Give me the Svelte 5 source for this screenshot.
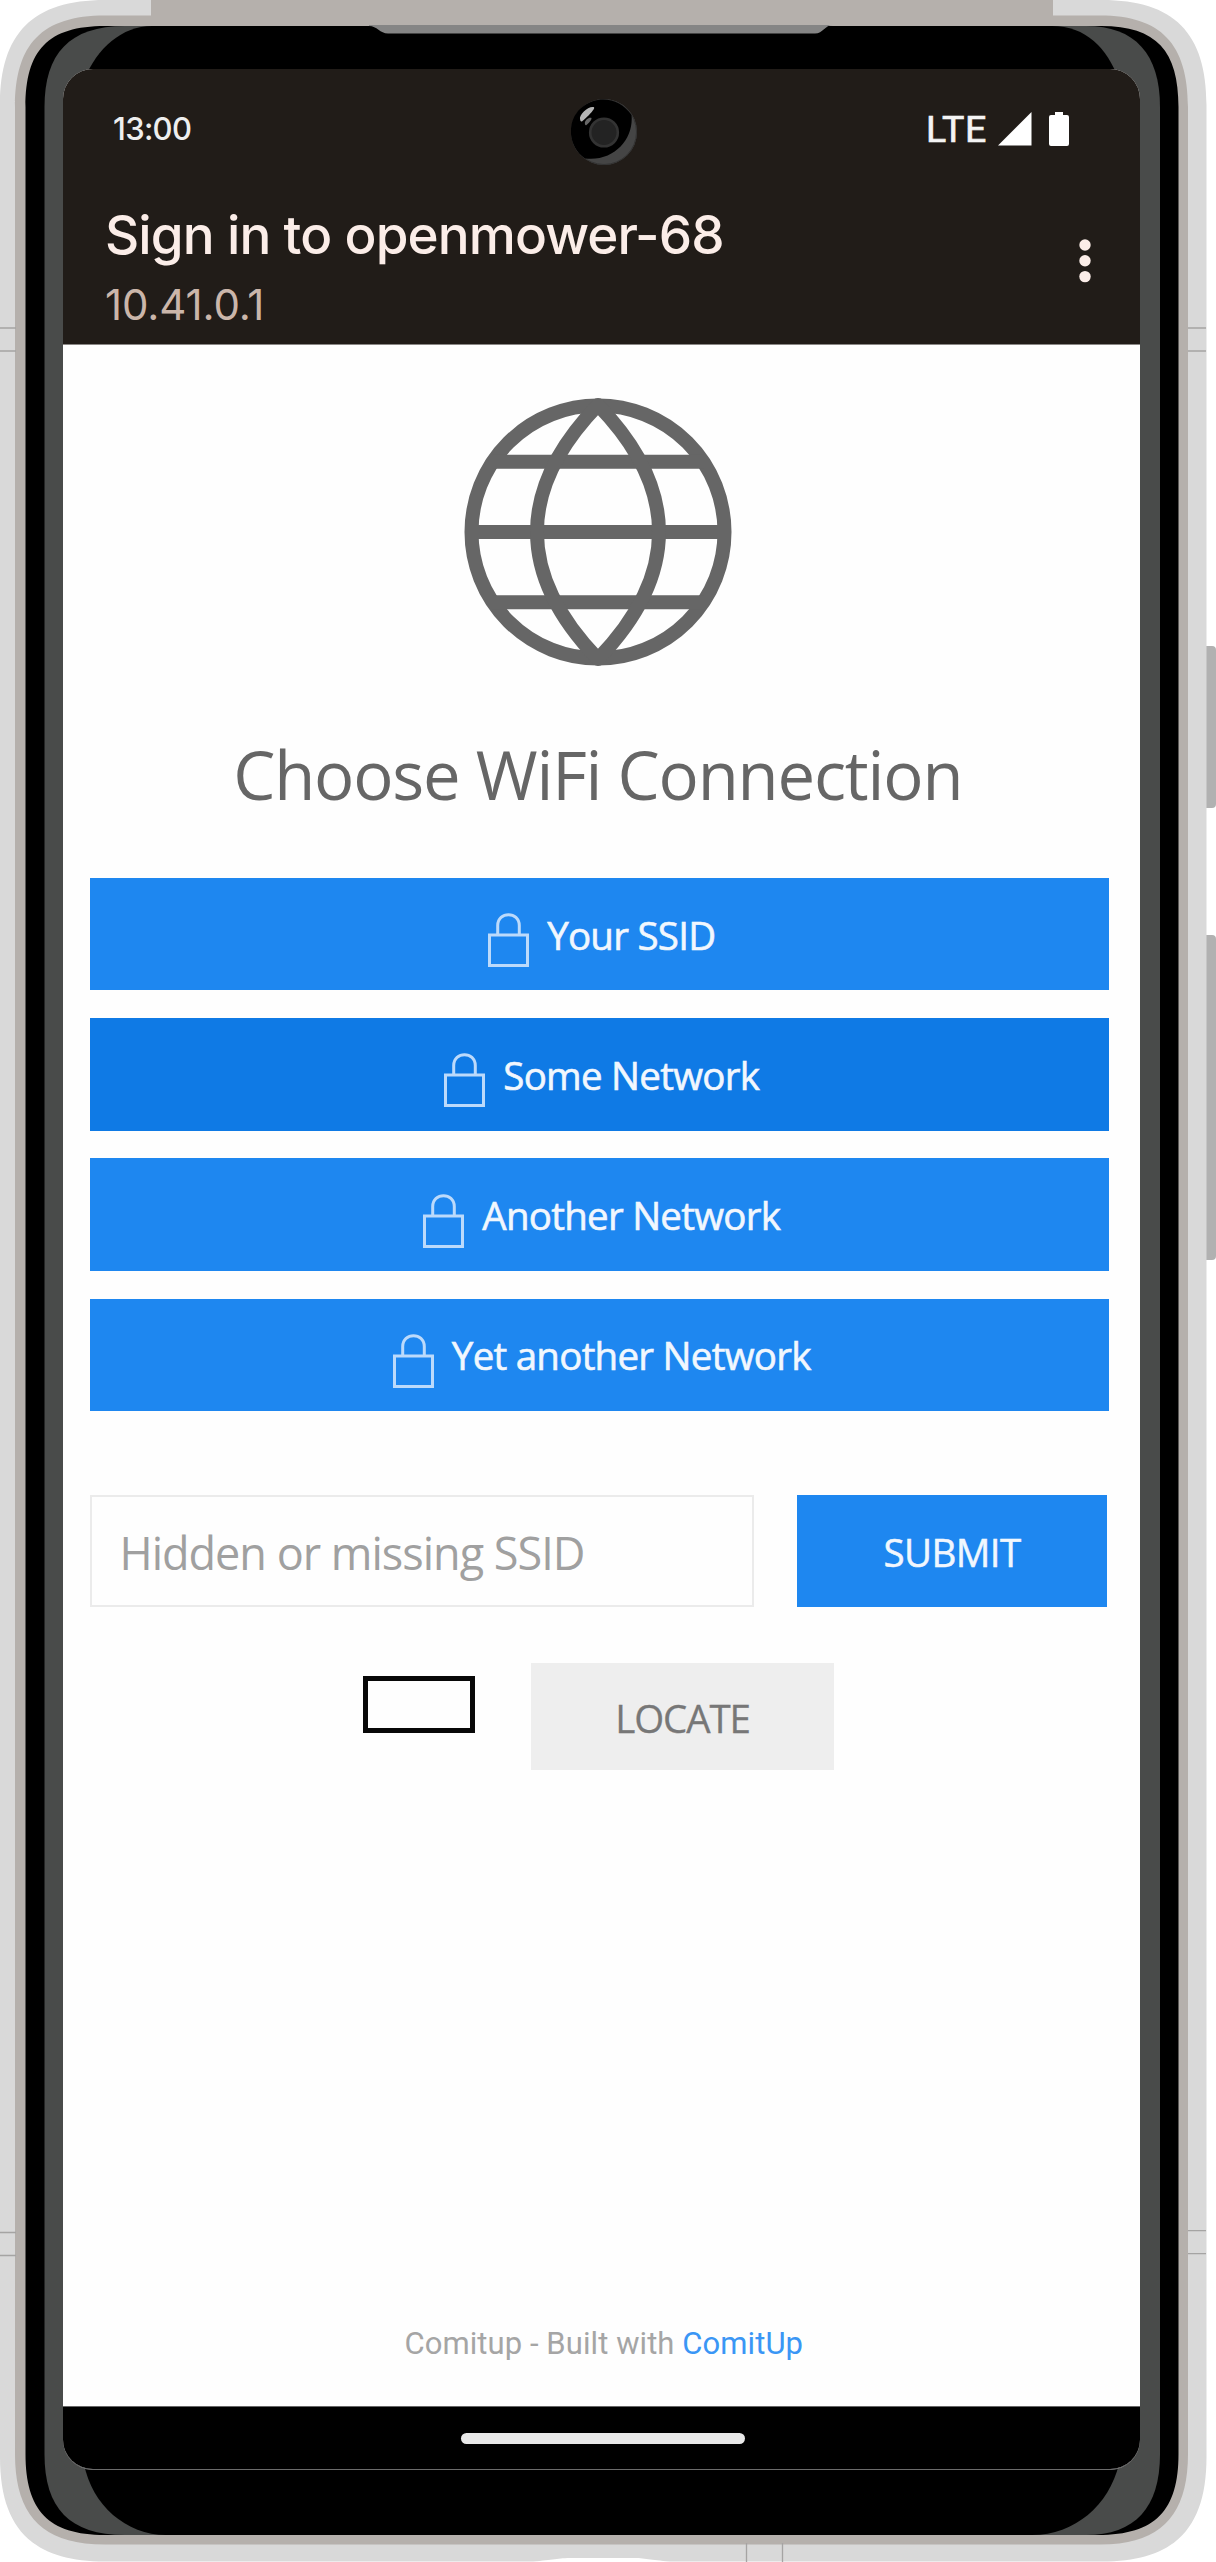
<script>
  const networks = [
    { name: 'Your SSID', active: false },
    { name: 'Some Network', active: true },
    { name: 'Another Network', active: false },
    { name: 'Yet another Network', active: false }
  ];
  let ssid = $state('');
</script>

<div class="phone">
  <!-- Device body: side keys, metal frame, bezel, antenna lines and speaker -->
  <svg class="frame" viewBox="0 0 1216 2562" aria-hidden="true">
    <path fill="#b1b1b1" d="M1206 646H1212Q1216 646 1216 650V804Q1216 808 1212 808H1206ZM1206 935H1212Q1216 935 1216 939V1256Q1216 1260 1212 1260H1206Z" />
    <path fill="#d9d9d9" d="M0 105C0 33 33 0 105 0H1102C1174 0 1206.500 33 1206.500 105V2457C1206.500 2529 1174 2561.500 1102 2561.500H670C650 2560 645 2558 632 2558H572C558 2558 553 2560 533 2561.500H105C33 2561.500 0 2529 0 2457Z" />
    <path fill="#b5b0ac" d="M15 107C15 44 42 15.500 105 15.500H151V0H1053V15.500H1100C1161 15.500 1188 44 1188 107V2454C1188 2515 1161 2544.500 1100 2544.500H105C42 2544.500 15 2515 15 2454Z" />
    <path fill="#000" d="M25.500 107C25.500 50 48 26 105 26H1098C1156 25 1178.500 50 1178.500 107V2454C1178.500 2510 1156 2535 1098 2535H105C48 2535 25.500 2510 25.500 2454Z" />
    <path fill="#494b4a" d="M44.500 107C44.500 54 69 26 125 26H1086C1135 26 1160 54 1160 107V2454C1160 2508 1135 2535 1086 2535H125C69 2535 44.500 2508 44.500 2454Z" />
    <path fill="#000" d="M84 80C97 48 122 26 152 26H1052C1086 26 1107 48 1119 80V2464C1109 2505 1075 2535 1032 2535H166C126 2535 92 2505 84 2464Z" />
    <path fill="#858585" d="M369 26C377 26 380 33.500 388 33.500H815C823 33.500 825 25 833 25H369Z" />
    <path stroke="#a5a4a3" stroke-width="1.300" fill="none" d="M0 328H16M0 351H16M1188 328H1206M1188 351H1206M0 2232.500H16M0 2255.500H16M1188 2230.700H1206M1188 2253.700H1206M746.500 2543V2562M782.500 2543V2562" />
  </svg>

  <main class="screen">
    <div class="status">
      <span class="time">13:00</span>
      <span class="lte">LTE</span>
      <svg class="signal" viewBox="0 0 34 34"><path fill="#fff" d="M0 33.500 33.500 0V33.500Z" /></svg>
      <svg class="battery" viewBox="0 0 20 34"><path fill="#fff" d="M6 0H14V3H18Q20 3 20 5V32Q20 34 18 34H2Q0 34 0 32V5Q0 3 2 3H6Z" /></svg>
    </div>

    <header class="appbar">
      <div class="titles">
        <h1>Sign in to openmower-68</h1>
        <p>10.41.0.1</p>
      </div>
      <svg class="more" viewBox="0 0 12 44" role="img" aria-label="More options">
        <g fill="#fbede8"><circle cx="6" cy="6" r="5.700" /><circle cx="6" cy="21.800" r="5.700" /><circle cx="6" cy="37.600" r="5.700" /></g>
      </svg>
    </header>

    <section class="page">
      <svg class="globe" viewBox="0 0 268 268" aria-hidden="true">
        <g fill="none" stroke="#666" stroke-width="14">
          <circle cx="134" cy="134" r="126.500" />
          <path d="M8 134H260M28 63.700H240M28 204.300H240" />
          <path d="M134 7C52.700 91 52.700 177 134 261C215.300 177 215.300 91 134 7Z" stroke-linejoin="round" />
        </g>
      </svg>

      <h2>Choose WiFi Connection</h2>

      <div class="networks">
        {#each networks as network}
          <button class="network" class:active={network.active}>
            <svg class="lock" viewBox="0 0 41 54" aria-hidden="true">
              <g fill="none" stroke="#bcdafb" stroke-width="3">
                <rect x="1.500" y="22" width="38" height="30.500" />
                <path d="M9.700 22V12.500C9.700 -2 31.300 -2 31.300 12.500V22" />
              </g>
            </svg>
            <span>{network.name}</span>
          </button>
        {/each}
      </div>

      <form class="hidden-network" onsubmit={(e) => e.preventDefault()}>
        <input bind:value={ssid} placeholder="Hidden or missing SSID" />
        <button class="submit">SUBMIT</button>
      </form>

      <div class="locate-row">
        <span class="indicator"></span>
        <button class="locate">LOCATE</button>
      </div>

      <footer>Comitup - Built with <span class="link">ComitUp</span></footer>
    </section>

    <nav class="gesture"><span class="pill"></span></nav>
  </main>

  <svg class="camera" viewBox="0 0 66 66" aria-hidden="true">
    <circle cx="33" cy="33" r="33" fill="#454545" />
    <circle cx="33" cy="33" r="32.500" fill="none" stroke="#333" />
    <path fill="#000" d="M14 59.500C-5 46 -4 19 12 7.500C28 -5 50 0 60.500 16C63 39 44 63 14 59.500Z" />
    <circle cx="33" cy="33.500" r="13.800" fill="#232323" stroke="#333" stroke-width="2.600" />
    <path fill="#b5b5b5" d="M9 20C8 16 17 7 22.500 8C26 9 15 19 11 22.500Q9.300 23 9 20Z" />
    <path fill="#676767" d="M13.800 24C14 21 18 18 20.500 19Q21 21 15.500 26Q14 27 13.800 24Z" />
  </svg>
</div>

<style>
  :global(body) {
    margin: 0;
    background: #fff;
  }
  .phone {
    position: relative;
    width: 1216px;
    height: 2562px;
    padding: 69px 76px 93px 63px;
    box-sizing: border-box;
    overflow: hidden;
    font-family: 'Open Sans', 'Noto Sans', sans-serif;
  }
  .frame {
    position: absolute;
    inset: 0;
    width: 1216px;
    height: 2562px;
  }
  .camera {
    position: absolute;
    left: 570.500px;
    top: 98.500px;
    width: 66px;
    height: 66px;
  }
  .screen {
    position: relative;
    display: flex;
    flex-direction: column;
    height: 2400px;
    border-bottom: 1px solid #6b6b6b;
    border-radius: 30px;
    overflow: hidden;
    background: #fefefe;
  }
  .status {
    display: flex;
    align-items: center;
    height: 119px;
    padding: 0 71px 0 50px;
    box-sizing: border-box;
    background: #211c18;
    color: #fff;
    flex: none;
  }
  .time {
    flex: 1;
    font: 500 31px/40px Inter, sans-serif;
    letter-spacing: -0.700px;
    color: #eee;
  }
  .lte {
    font: 400 37.500px/40px Roboto, sans-serif;
    letter-spacing: 0.700px;
    color: #f4f4f4;
    margin-right: 10.500px;
    -webkit-text-stroke: 0.700px #f4f4f4;
  }
  .signal {
    width: 34px;
    height: 34px;
    margin-right: 17.500px;
  }
  .battery {
    width: 20px;
    height: 34px;
  }
  .appbar {
    display: flex;
    justify-content: space-between;
    height: 157px;
    padding: 16.500px 49px 0 42px;
    box-sizing: border-box;
    background: #211c18;
    border-bottom: 1px solid #8a8785;
    flex: none;
  }
  h1 {
    margin: 0;
    font: 500 53px/60px Inter, sans-serif;
    letter-spacing: -0.900px;
    color: #fbede8;
    white-space: nowrap;
  }
  p {
    margin: 15px 0 0;
    font: 400 42px/50px Inter, sans-serif;
    letter-spacing: -0.100px;
    color: #cbb6aa;
  }
  .more {
    width: 12px;
    height: 44px;
    margin-top: 34px;
  }
  .page {
    flex: 1;
    display: flex;
    flex-direction: column;
    padding: 53px 31px 0 26.500px;
  }
  .globe {
    width: 268px;
    height: 268px;
    align-self: center;
    margin-right: 2.500px;
    flex: none;
  }
  h2 {
    margin: 67.500px 0 64.200px;
    padding-right: 3px;
    font-size: 67px;
    line-height: 80px;
    font-weight: 400;
    letter-spacing: -1.180px;
    color: #666;
    text-align: center;
    white-space: nowrap;
  }
  .networks {
    display: grid;
    gap: 27.600px;
  }
  button {
    border: 0;
    padding: 0;
    font: 400 38.500px/50px 'Open Sans', 'Noto Sans', sans-serif;
    color: #fff;
    background: #1e87f0;
  }
  .network {
    display: flex;
    align-items: center;
    justify-content: center;
    gap: 18px;
    height: 112.700px;
    padding: 1px 0 0 5px;
    letter-spacing: -0.750px;
  }
  .network.active {
    background: #0f7ae5;
  }
  .network span {
    color: #f1f7fe;
    -webkit-text-stroke: 0.600px #f1f7fe;
  }
  .lock {
    width: 41px;
    height: 54px;
    margin-top: 11px;
  }
  .hidden-network {
    display: flex;
    justify-content: space-between;
    height: 112.700px;
    margin-top: 83.500px;
    padding-right: 2px;
  }
  input {
    width: 664.500px;
    box-sizing: border-box;
    border: 2px solid #ebebeb;
    padding: 4px 28px 0;
    font: 400 45px/60px 'Open Sans', 'Noto Sans', sans-serif;
    letter-spacing: -1px;
    background: #fefefe;
  }
  input::placeholder {
    color: #a0a0a0;
    opacity: 1;
  }
  .submit {
    width: 310px;
    padding-top: 1px;
    letter-spacing: -0.600px;
    color: #f1f7fe;
    -webkit-text-stroke: 0.500px #f1f7fe;
  }
  .locate-row {
    display: flex;
    align-items: flex-start;
    gap: 56px;
    margin-top: 55.500px;
    padding-left: 273.500px;
  }
  .indicator {
    width: 112px;
    height: 57px;
    margin-top: 13px;
    box-sizing: border-box;
    border: 5px solid #080808;
  }
  .locate {
    width: 303px;
    height: 106.700px;
    padding-top: 4px;
    letter-spacing: -1.100px;
    color: #777;
    background: #eee;
    -webkit-text-stroke: 0.300px #777;
  }
  footer {
    margin-top: auto;
    padding: 0 0 42.500px 9px;
    font: 400 31px/40px Roboto, sans-serif;
    letter-spacing: 0.080px;
    color: #a5a5a5;
    text-align: center;
  }
  .link {
    color: #3a96f5;
  }
  .gesture {
    display: flex;
    justify-content: center;
    height: 63px;
    padding: 25.500px 0 0 3px;
    box-sizing: border-box;
    background: #000;
    border-top: 1px solid #666;
    flex: none;
  }
  .pill {
    width: 284px;
    height: 11px;
    border-radius: 6px;
    background: #e9e9e9;
  }
</style>
